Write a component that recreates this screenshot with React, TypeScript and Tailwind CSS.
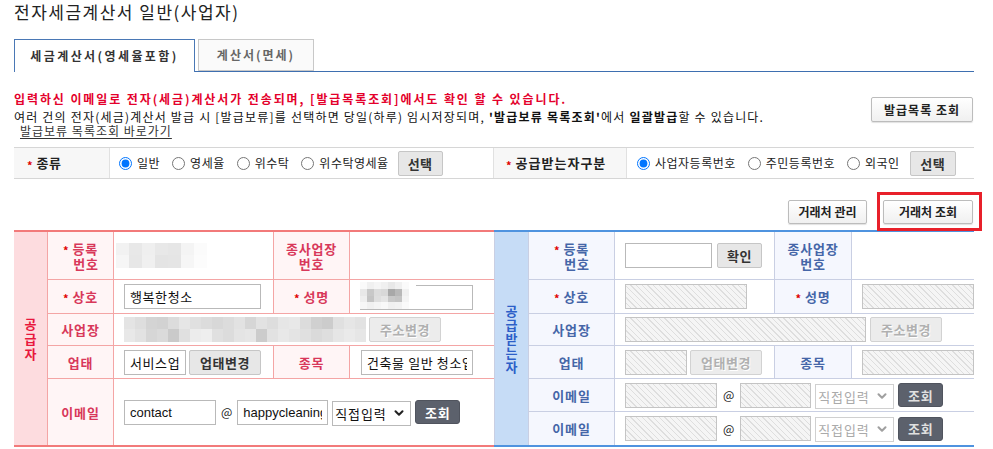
import React from "react";
import { ChevronDown } from "lucide-react";

const Star = () => (
  <span className="inline-block text-[#e00000] text-[11px] leading-none translate-y-[2px] mr-[4px] font-bold tracking-normal">*</span>
);

const whiteBtn =
  "border border-[#bcbcbc] bg-linear-to-b from-white to-[#f0f0f0] rounded-[2px] text-[12px] font-bold text-[#222] shadow-[0_1px_1px_rgba(0,0,0,0.12)] flex items-center justify-center leading-none";
const grayBtn =
  "h-[25px] border border-[#c6c6c6] bg-[#e7e7e7] rounded-[2px] text-[13px] font-bold text-[#333] leading-none flex items-center justify-center shrink-0 tracking-[0.5px]";
const disBtn =
  "h-[25px] border border-[#d2d2d2] bg-[#ececec] rounded-[2px] text-[13px] font-bold text-[#b0b0b0] [text-shadow:1px_1px_0_#fff] leading-none flex items-center justify-center shrink-0 tracking-[0.5px]";
const darkBtn =
  "h-[24px] w-[45px] rounded-[3px] bg-[#5c616c] border border-[#50545e] text-[13px] font-bold leading-none flex items-center justify-center shrink-0 ml-[4px] tracking-[1px]";
const hatch =
  "bg-[#f3f3f3] bg-[image:repeating-linear-gradient(45deg,#f5f5f5_0px,#f5f5f5_3px,#dedede_3px,#dedede_4px)] border border-[#c4c4c4] h-[25px] shrink-0";
const inputCls =
  "h-[25px] border border-[#b9b9b9] px-[5px] text-[13px] text-[#111] outline-none bg-white shrink-0";
const latinInput = "font-['Liberation_Sans',Arial,sans-serif] px-[5px] text-[12.5px]";

const regRows = [
  ["bg-[#f2f2f2]", "bg-[#e8e8e8]", "bg-[#efefef]", "bg-[#e8e8e8]", "bg-[#e6e6e6]", "bg-[#f4f4f4]", "bg-[#fbfbfb]"],
  ["bg-[#f6f6f6]", "bg-[#e7e7e7]", "bg-[#f0f0f0]", "bg-[#e4e4e4]", "bg-[#e5e5e5]", "bg-[#f6f6f6]", "bg-[#fcfcfc]"],
];
const nameRows = [
  ["bg-[#fafafa]", "bg-[#f0f0f0]", "bg-[#f5f5f5]", "bg-[#f0f0f0]", "bg-[#e8e8e8]", "bg-[#f0f0f0]", "bg-[#fafafa]", "bg-[#ffffff]"],
  ["bg-[#e8e8e8]", "bg-[#c8c8c8]", "bg-[#dcdcdc]", "bg-[#d8d8d8]", "bg-[#a8a8a8]", "bg-[#b8b8b8]", "bg-[#f0f0f0]", "bg-[#ffffff]"],
  ["bg-[#eeeeee]", "bg-[#c4c4c4]", "bg-[#dedede]", "bg-[#e4e4e4]", "bg-[#c8c8c8]", "bg-[#c4c4c4]", "bg-[#f4f4f4]", "bg-[#ffffff]"],
  ["bg-[#f6f6f6]", "bg-[#f0f0f0]", "bg-[#f4f4f4]", "bg-[#f8f8f8]", "bg-[#f0f0f0]", "bg-[#f2f2f2]", "bg-[#fafafa]", "bg-[#ffffff]"],
];
const addrRows = [
  ["bg-[#e4e4e4]", "bg-[#dedede]", "bg-[#d4d4d4]", "bg-[#d2d2d2]", "bg-[#dcdcdc]", "bg-[#e6e6e6]", "bg-[#e0e0e0]", "bg-[#dcdcdc]", "bg-[#d8d8d8]", "bg-[#dcdcdc]", "bg-[#e2e2e2]", "bg-[#d6d6d6]", "bg-[#e2e2e2]", "bg-[#dddddd]", "bg-[#e6e6e6]", "bg-[#e8e8e8]", "bg-[#dcdcdc]", "bg-[#d0d0d0]", "bg-[#cccccc]", "bg-[#e0e0e0]", "bg-[#e6e6e6]", "bg-[#e2e2e2]"],
  ["bg-[#e8e8e8]", "bg-[#e2e2e2]", "bg-[#d6d6d6]", "bg-[#dadada]", "bg-[#cacaca]", "bg-[#e0e0e0]", "bg-[#ececec]", "bg-[#eeeeee]", "bg-[#e0e0e0]", "bg-[#dcdcdc]", "bg-[#e4e4e4]", "bg-[#e6e6e6]", "bg-[#cccccc]", "bg-[#e2e2e2]", "bg-[#e8e8e8]", "bg-[#e4e4e4]", "bg-[#e0e0e0]", "bg-[#dadada]", "bg-[#dedede]", "bg-[#e6e6e6]", "bg-[#eaeaea]", "bg-[#e6e6e6]"],
];

function Mosaic({ rows, cw, rh }: { rows: string[][]; cw: string; rh: string[] }) {
  return (
    <div className="flex flex-col shrink-0">
      {rows.map((r, i) => (
        <div key={i} className="flex">
          {r.map((c, j) => (
            <div key={j} className={`${cw} ${rh[i]} ${c}`} />
          ))}
        </div>
      ))}
    </div>
  );
}

function Select({ dis }: { dis?: boolean }) {
  return (
    <div className="relative w-[79px] h-[25px] ml-[4px] shrink-0">
      <select
        className={`appearance-none w-full h-full border ${dis ? "border-[#d0d0d0] text-[#aaaaaa]" : "border-[#b9b9b9] text-[#111]"} bg-white pl-[2px] text-[13px] tracking-[0.8px] outline-none`}
      >
        <option>직접입력</option>
      </select>
      <ChevronDown
        size={14}
        strokeWidth={3.5}
        className={`absolute right-[5px] top-[6px] pointer-events-none ${dis ? "text-[#a0a0a0]" : "text-[#222]"}`}
      />
    </div>
  );
}

const Radio = ({ checked, label }: { checked?: boolean; label: string }) => (
  <label className="flex items-center gap-[5px] mr-[12px] text-[12px] text-[#222] tracking-[0.5px]">
    <input type="radio" readOnly checked={!!checked} className="m-0 w-[13px] h-[13px]" />
    {label}
  </label>
);

const LBd = "border-[#f4a5a5]";
const lLabel = `bg-[#fff5f6] flex items-center justify-center text-[13px] font-bold text-[#d8385a] leading-[15px] tracking-[0.8px] ${LBd}`;
const RBd = "border-[#c9cfe3]";
const rLabel = `bg-[#f5f7fe] flex items-center justify-center text-[13px] font-bold text-[#4566a8] leading-[15px] tracking-[0.8px] ${RBd}`;

export default function App() {
  return (
    <div className="w-[993px] h-[449px] overflow-hidden bg-white font-['Noto_Sans_CJK_KR','Noto_Sans',sans-serif] text-[#111]">
      <div className="pl-[14px] w-[974px]">
        <h1 className="h-[24px] text-[17px] leading-[24px] text-[#222] tracking-[1.5px]">전자세금계산서 일반(사업자)</h1>

        {/* tabs */}
        <div className="mt-[15px] h-[33px] flex items-start border-b border-[#3e6fb0]">
          <div className="h-[33px] w-[181px] border border-b-0 border-[#4a78b5] bg-white flex items-center justify-center text-[12px] font-bold text-[#333] tracking-[2.4px]">
            세금계산서(영세율포함)
          </div>
          <div className="h-[32px] w-[116px] ml-[3px] border border-[#c8c8c8] bg-[#fafafa] flex items-center justify-center text-[12px] font-bold text-[#666] tracking-[2px]">
            계산서(면세)
          </div>
        </div>

        {/* notice */}
        <div className="mt-[20px] flex justify-between">
          <div className="text-[12px] leading-[14px]">
            <div className="font-bold text-[#e4002b] tracking-[1.9px]">
              입력하신 이메일로 전자(세금)계산서가 전송되며, [발급목록조회]에서도 확인 할 수 있습니다.
            </div>
            <div className="mt-[4px] text-[#111] tracking-[1.2px]">
              여러 건의 전자(세금)계산서 발급 시 [발급보류]를 선택하면 당일(하루) 임시저장되며,{" "}
              <b>'발급보류 목록조회'</b>에서 <b>일괄발급</b>할 수 있습니다.
            </div>
            <div className="ml-[6px] text-[#333] underline underline-offset-2 tracking-[1px]">발급보류 목록조회 바로가기</div>
          </div>
          <button className={`${whiteBtn} mt-[5px] h-[25px] w-[102px] mr-[1px] tracking-[1px]`}>발급목록 조회</button>
        </div>

        {/* type row */}
        <div className="mt-[9px] flex h-[32px] border-y border-[#d6d6d6]">
          <div className="w-[96px] bg-[#f7f7f7] border-r border-[#e1e1e1] flex items-center pl-[13px] text-[13px] font-bold text-[#222] tracking-[0.5px]">
            <Star />
            종류
          </div>
          <div className="w-[383px] flex items-center pl-[9px]">
            <Radio checked label="일반" />
            <Radio label="영세율" />
            <Radio label="위수탁" />
            <Radio label="위수탁영세율" />
            <button className={`${grayBtn} w-[45px] h-[24px] -ml-[3px]`}>선택</button>
          </div>
          <div className="w-[134px] bg-[#f7f7f7] border-x border-[#e1e1e1] flex items-center pl-[12px] text-[13px] font-bold text-[#222] tracking-[1px]">
            <Star />
            공급받는자구분
          </div>
          <div className="flex-1 flex items-center pl-[10px]">
            <Radio checked label="사업자등록번호" />
            <Radio label="주민등록번호" />
            <Radio label="외국인" />
            <button className={`${grayBtn} w-[46px] h-[24px] -ml-[2px]`}>선택</button>
          </div>
        </div>

        {/* partner buttons */}
        <div className="mt-[21px] h-[24px] flex justify-end gap-[16px] pr-[1px]">
          <button className={`${whiteBtn} h-[24px] w-[79px]`}>거래처 관리</button>
          <div className="relative">
            <button className={`${whiteBtn} h-[24px] w-[90px]`}>거래처 조회</button>
            <div className="absolute -left-[6px] -top-[8px] w-[105px] h-[39px] border-[3px] border-[#e8202a] pointer-events-none" />
          </div>
        </div>

        {/* tables */}
        <div className="mt-[6px] flex">
          {/* supplier */}
          <div className="w-[480px] grid grid-cols-[34px_66px_160px_76px_144px] grid-rows-[48px_34px_32px_33px_66px] border-y-2 border-[#f27a7a]">
            <div className={`row-span-5 bg-[#fddcdf] border-r ${LBd} flex flex-col items-center justify-center text-[13px] font-bold text-[#e8173d]`}>
              <span className="h-[15px] leading-[15px]">공</span>
              <span className="h-[15px] leading-[15px]">급</span>
              <span className="h-[15px] leading-[15px]">자</span>
            </div>
            {/* row1 */}
            <div className={`${lLabel} flex-col border-r border-b`}>
              <div className="flex items-center">
                <Star />
                등록
              </div>
              <div className="pl-[11px]">번호</div>
            </div>
            <div className={`border-r border-b ${LBd} flex items-center pl-[2px]`}>
              <Mosaic rows={regRows} cw="w-[13px]" rh={["h-[12px]", "h-[13px]"]} />
            </div>
            <div className={`${lLabel} flex-col border-r border-b`}>
              <div>종사업장</div>
              <div>번호</div>
            </div>
            <div className={`border-b ${LBd}`} />
            {/* row2 */}
            <div className={`${lLabel} border-r border-b`}>
              <Star />
              상호
            </div>
            <div className={`border-r border-b ${LBd} flex items-center pl-[10px]`}>
              <input readOnly value="행복한청소" className={`${inputCls} w-[137px] px-[4px] tracking-[0.6px]`} />
            </div>
            <div className={`${lLabel} border-r border-b`}>
              <Star />
              성명
            </div>
            <div className={`border-b ${LBd} flex items-center pl-[10px]`}>
              <div className="relative">
                <input readOnly value="" className={`${inputCls} w-[113px]`} />
                <div className="absolute left-0 -top-[2px]">
                  <Mosaic rows={nameRows} cw="w-[7px]" rh={["h-[7px]", "h-[7px]", "h-[6px]", "h-[7px]"]} />
                </div>
              </div>
            </div>
            {/* row3 */}
            <div className={`${lLabel} border-r border-b`}>사업장</div>
            <div className={`col-span-3 border-b ${LBd} flex items-center pl-[10px]`}>
              <Mosaic rows={addrRows} cw="w-[11px]" rh={["h-[12px]", "h-[13px]"]} />
              <button className={`${disBtn} w-[72px] ml-[3px]`}>주소변경</button>
            </div>
            {/* row4 */}
            <div className={`${lLabel} border-r border-b`}>업태</div>
            <div className={`border-r border-b ${LBd} flex items-center pl-[10px]`}>
              <input readOnly value="서비스업" className={`${inputCls} w-[62px] tracking-[0.6px]`} />
              <button className={`${grayBtn} w-[72px] ml-[3px]`}>업태변경</button>
            </div>
            <div className={`${lLabel} border-r border-b`}>종목</div>
            <div className={`border-b ${LBd} flex items-center pl-[11px]`}>
              <input readOnly value="건축물 일반 청소업" className={`${inputCls} w-[112px] px-[4px] tracking-[0.6px]`} />
            </div>
            {/* row5 */}
            <div className={`${lLabel} border-r`}>이메일</div>
            <div className="col-span-3 flex items-center pl-[10px]">
              <input readOnly value="contact" className={`${inputCls} ${latinInput} w-[92px]`} />
              <span className="mx-[5px] text-[12px] text-[#222]">@</span>
              <input readOnly value="happycleaning.co.kr" className={`${inputCls} ${latinInput} w-[91px]`} />
              <Select />
              <button className={`${darkBtn} text-white`}>조회</button>
            </div>
          </div>

          {/* receiver */}
          <div className="w-[480px] grid grid-cols-[35px_86px_160px_77px_122px] grid-rows-[48px_34px_32px_33px_33px_33px] border-y-2 border-[#4f93df]">
            <div className={`row-span-6 bg-[#c6dcf6] border-x ${RBd} flex flex-col items-center justify-center text-[13px] font-bold text-[#2d5fc8]`}>
              <span className="h-[14px] leading-[14px]">공</span>
              <span className="h-[14px] leading-[14px]">급</span>
              <span className="h-[14px] leading-[14px]">받</span>
              <span className="h-[14px] leading-[14px]">는</span>
              <span className="h-[14px] leading-[14px]">자</span>
            </div>
            {/* row1 */}
            <div className={`${rLabel} flex-col border-r border-b`}>
              <div className="flex items-center">
                <Star />
                등록
              </div>
              <div className="pl-[11px]">번호</div>
            </div>
            <div className={`border-r border-b ${RBd} flex items-center pl-[10px]`}>
              <input readOnly value="" className={`${inputCls} w-[87px]`} />
              <button className={`${grayBtn} w-[45px] ml-[5px] text-[#111]`}>확인</button>
            </div>
            <div className={`${rLabel} flex-col border-r border-b`}>
              <div>종사업장</div>
              <div>번호</div>
            </div>
            <div className={`border-b ${RBd}`} />
            {/* row2 */}
            <div className={`${rLabel} border-r border-b`}>
              <Star />
              상호
            </div>
            <div className={`border-r border-b ${RBd} flex items-center pl-[10px]`}>
              <div className={`${hatch} w-[122px]`} />
            </div>
            <div className={`${rLabel} border-r border-b`}>
              <Star />
              성명
            </div>
            <div className={`border-b ${RBd} flex items-center pl-[10px]`}>
              <div className={`${hatch} w-[112px]`} />
            </div>
            {/* row3 */}
            <div className={`${rLabel} border-r border-b`}>사업장</div>
            <div className={`col-span-3 border-b ${RBd} flex items-center pl-[10px]`}>
              <div className={`${hatch} w-[241px]`} />
              <button className={`${disBtn} w-[72px] ml-[4px]`}>주소변경</button>
            </div>
            {/* row4 */}
            <div className={`${rLabel} border-r border-b`}>업태</div>
            <div className={`border-r border-b ${RBd} flex items-center pl-[10px]`}>
              <div className={`${hatch} w-[62px]`} />
              <button className={`${disBtn} w-[72px] ml-[3px]`}>업태변경</button>
            </div>
            <div className={`${rLabel} border-r border-b`}>종목</div>
            <div className={`border-b ${RBd} flex items-center pl-[10px]`}>
              <div className={`${hatch} w-[112px]`} />
            </div>
            {/* row5 */}
            <div className={`${rLabel} border-r border-b`}>이메일</div>
            <div className={`col-span-3 border-b ${RBd} flex items-center pl-[10px]`}>
              <div className={`${hatch} w-[92px]`} />
              <span className="mx-[6px] text-[12px] text-[#222]">@</span>
              <div className={`${hatch} w-[71px]`} />
              <Select dis />
              <button className={`${darkBtn} text-[#e0e0e0]`}>조회</button>
            </div>
            {/* row6 */}
            <div className={`${rLabel} border-r`}>이메일</div>
            <div className="col-span-3 flex items-center pl-[10px]">
              <div className={`${hatch} w-[92px]`} />
              <span className="mx-[6px] text-[12px] text-[#222]">@</span>
              <div className={`${hatch} w-[71px]`} />
              <Select dis />
              <button className={`${darkBtn} text-[#e0e0e0]`}>조회</button>
            </div>
          </div>
        </div>
      </div>
    </div>
  );
}
